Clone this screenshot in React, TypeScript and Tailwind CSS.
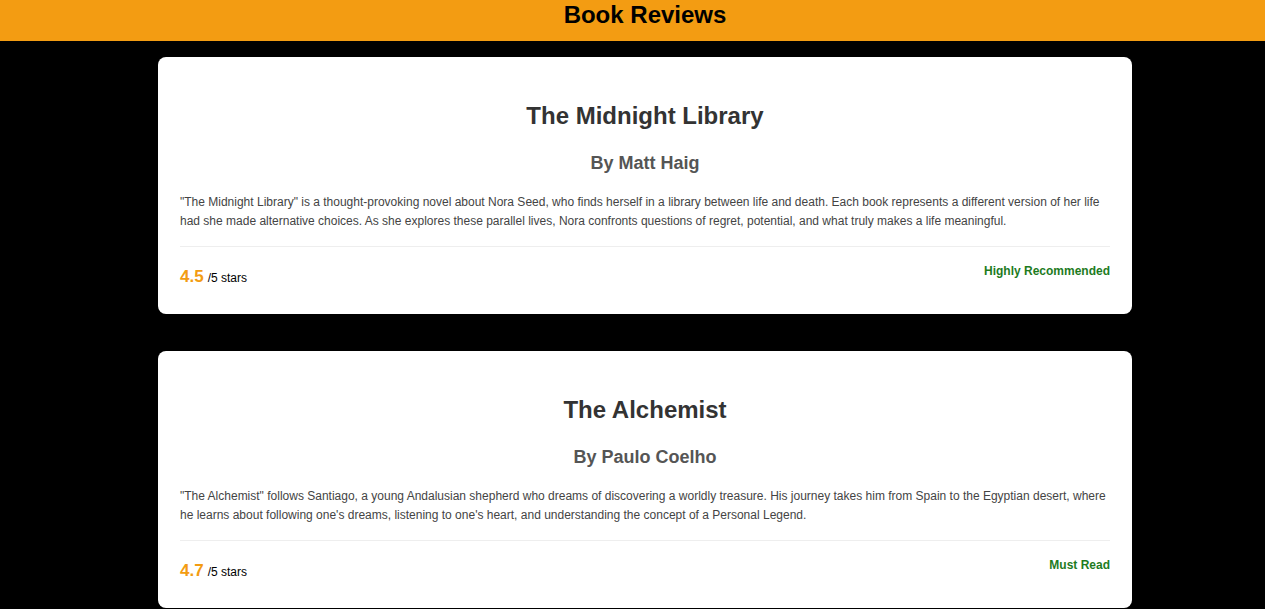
import React from 'react';

type Review = {
  title: string;
  author: string;
  summary: string;
  rating: string;
  verdict: string;
};

const reviews: Review[] = [
  {
    title: 'The Midnight Library',
    author: 'Matt Haig',
    summary:
      '"The Midnight Library" is a thought-provoking novel about Nora Seed, who finds herself in a library between life and death. Each book represents a different version of her life had she made alternative choices. As she explores these parallel lives, Nora confronts questions of regret, potential, and what truly makes a life meaningful.',
    rating: '4.5',
    verdict: 'Highly Recommended',
  },
  {
    title: 'The Alchemist',
    author: 'Paulo Coelho',
    summary:
      '"The Alchemist" follows Santiago, a young Andalusian shepherd who dreams of discovering a worldly treasure. His journey takes him from Spain to the Egyptian desert, where he learns about following one\'s dreams, listening to one\'s heart, and understanding the concept of a Personal Legend.',
    rating: '4.7',
    verdict: 'Must Read',
  },
];

function ReviewCard({ review }: { review: Review }) {
  return (
    <article className="w-[974px] bg-white rounded-lg px-[22px] pt-[22px] pb-[26px]">
      <h2 className="text-center text-[24px] leading-[28px] font-bold text-[#333] mt-[23px]">{review.title}</h2>
      <h3 className="text-center text-[18px] leading-[22px] font-bold text-[#555] mt-[22px]">By {review.author}</h3>
      <p className="text-[12px] leading-[19px] text-[#444] mt-[19px]">{review.summary}</p>
      <div className="flex justify-between items-start border-t border-[#eee] mt-[15px] pt-[15px]">
        <div className="mt-[4px] flex items-baseline">
          <span className="text-[17px] leading-[22px] font-bold text-[#f39c12]">{review.rating}</span>
          <span className="text-[12px] ml-[4px] text-black">/5 stars</span>
        </div>
        <span className="text-[12px] leading-[18px] font-bold text-[#1e7b1e]">{review.verdict}</span>
      </div>
    </article>
  );
}

export default function App() {
  return (
    <div className="min-h-screen bg-black font-['Liberation_Sans',Arial,sans-serif]">
      <header className="h-[41px] bg-[#f39c12] pl-[25px] pt-px">
        <h1 className="text-center text-[24px] leading-[28px] font-bold text-black">Book Reviews</h1>
      </header>
      <main className="pl-[25px] pt-[16px] flex flex-col items-center gap-[37px] pb-[40px]">
        {reviews.map((r) => (
          <ReviewCard key={r.title} review={r} />
        ))}
      </main>
    </div>
  );
}
